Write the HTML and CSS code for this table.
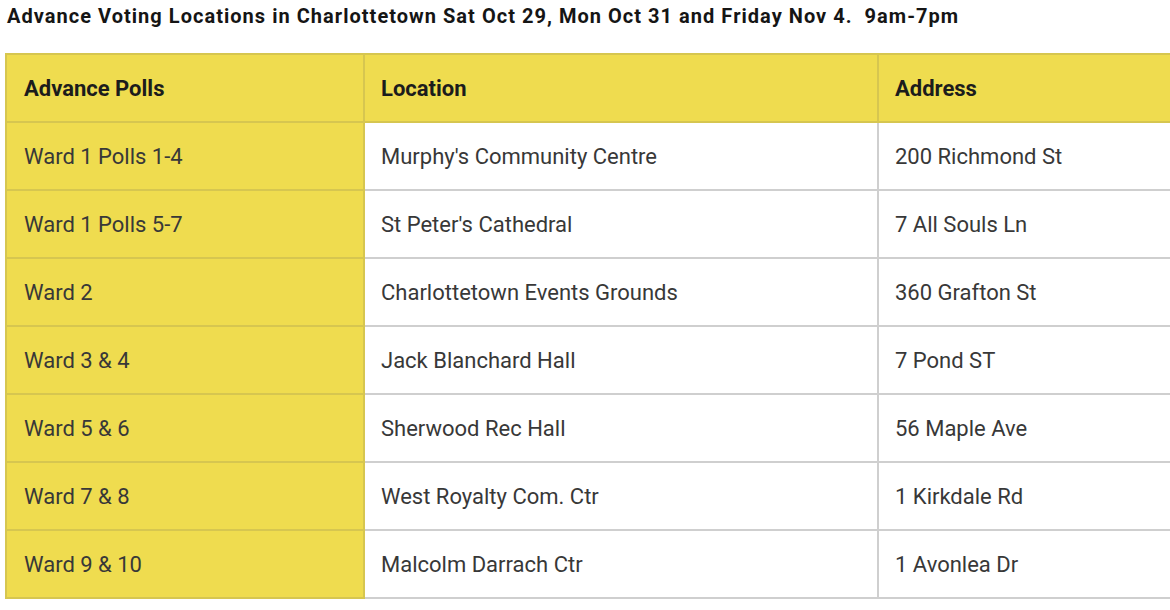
FILE: index.html
```html
<!DOCTYPE html>
<html>
<head>
<meta charset="utf-8">
<link rel="stylesheet" href="styles.css">
</head>
<body>
<div class="page">
  <h1 class="title">Advance Voting Locations in Charlottetown Sat Oct 29, Mon Oct 31 and Friday Nov 4.&nbsp; 9am-7pm</h1>
  <table class="polls">
    <colgroup>
      <col class="c1"><col class="c2"><col class="c3">
    </colgroup>
    <thead>
      <tr><th>Advance Polls</th><th>Location</th><th>Address</th></tr>
    </thead>
    <tbody>
      <tr><td>Ward 1 Polls 1-4</td><td>Murphy's Community Centre</td><td>200 Richmond St</td></tr>
      <tr><td>Ward 1 Polls 5-7</td><td>St Peter's Cathedral</td><td>7 All Souls Ln</td></tr>
      <tr><td>Ward 2</td><td>Charlottetown Events Grounds</td><td>360 Grafton St</td></tr>
      <tr><td>Ward 3 &amp; 4</td><td>Jack Blanchard Hall</td><td>7 Pond ST</td></tr>
      <tr><td>Ward 5 &amp; 6</td><td>Sherwood Rec Hall</td><td>56 Maple Ave</td></tr>
      <tr><td>Ward 7 &amp; 8</td><td>West Royalty Com. Ctr</td><td>1 Kirkdale Rd</td></tr>
      <tr><td>Ward 9 &amp; 10</td><td>Malcolm Darrach Ctr</td><td>1 Avonlea Dr</td></tr>
    </tbody>
  </table>
</div>
</body>
</html>
```
FILE: styles.css
```css
html, body {
  margin: 0;
  padding: 0;
  background: #fff;
  overflow: hidden;
}
.page {
  width: 1170px;
  height: 610px;
  overflow: hidden;
  font-family: Roboto, "Liberation Sans", sans-serif;
}
.title {
  margin: 0;
  padding: 4px 0 0 7px;
  font-size: 20px;
  font-weight: 700;
  line-height: 24px;
  letter-spacing: 1.03px;
  color: #151515;
  white-space: nowrap;
}
.polls {
  margin: 25px 0 0 5px;
  border-collapse: collapse;
  table-layout: fixed;
  width: 1200px;
  font-size: 22px;
  color: #383838;
}
.c1 { width: 358px; }
.c2 { width: 514px; }
.c3 { width: 328px; }
.polls th,
.polls td {
  height: 66px;
  padding: 0 16px;
  text-align: left;
  border: 2px solid #cfcfcf;
  vertical-align: middle;
}
.polls th {
  background: #efdc4f;
  font-weight: 700;
  color: #1c1c1c;
  border-color: #d6c650;
}
.polls td:first-child {
  background: #efdc4f;
  padding-left: 17px;
  border-color: #d6c650;
}
.polls th:first-child {
  padding-left: 17px;
}
```
